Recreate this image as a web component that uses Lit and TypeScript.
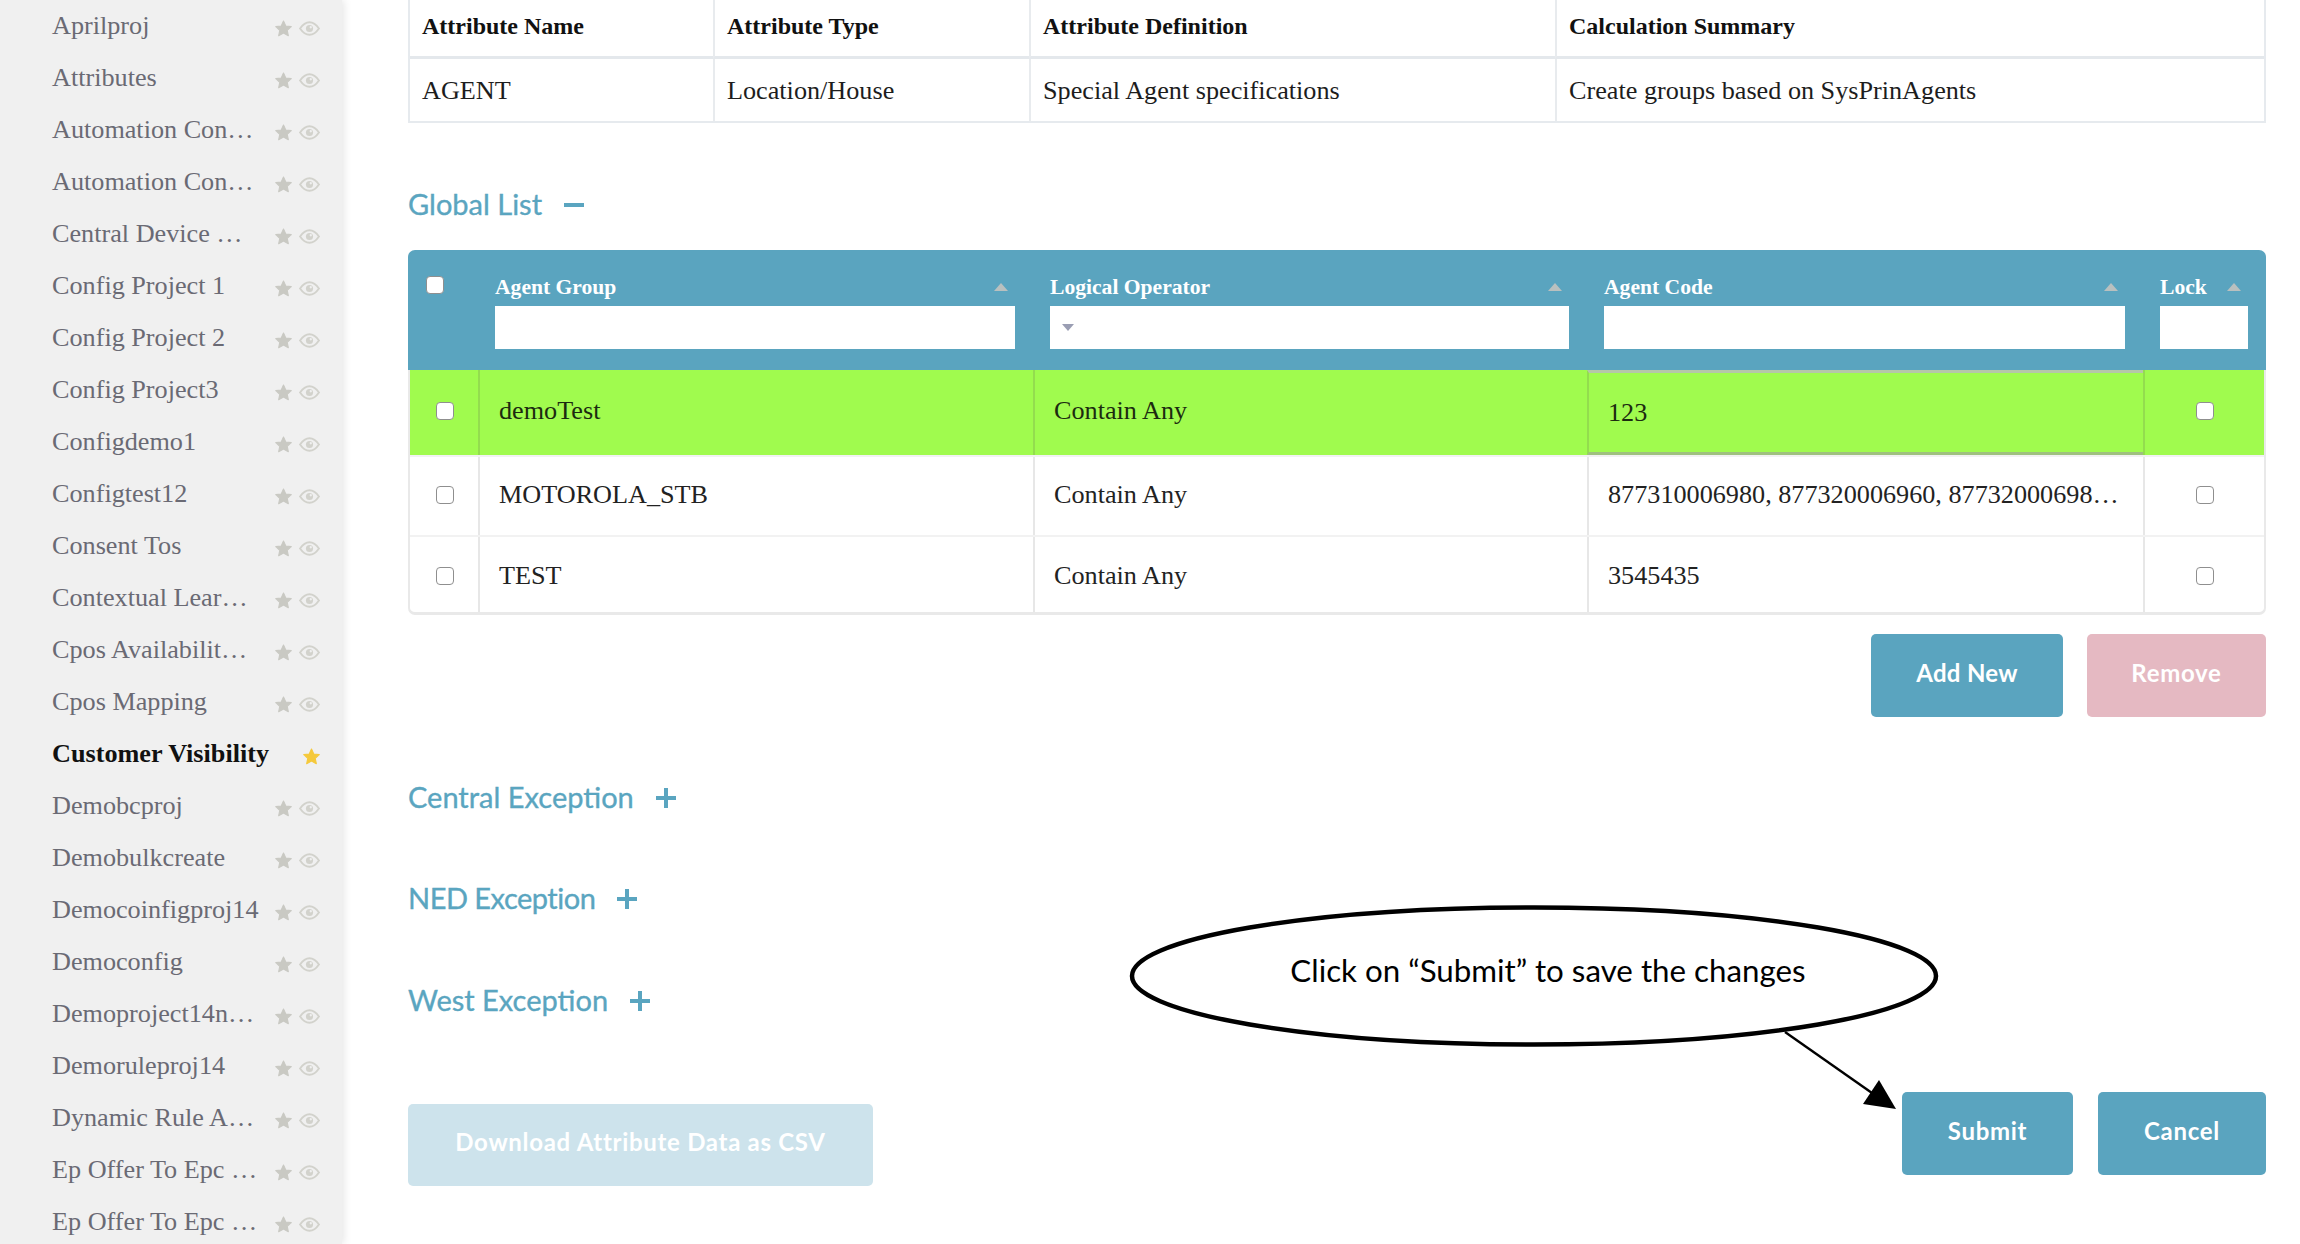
import { LitElement, html, css } from "lit";
import { customElement } from "lit/decorators.js";

const NAMES = [
  "Aprilproj", "Attributes", "Automation Con…", "Automation Con…", "Central Device …",
  "Config Project 1", "Config Project 2", "Config Project3", "Configdemo1", "Configtest12", "Consent Tos",
  "Contextual Lear…", "Cpos Availabilit…", "Cpos Mapping", "Customer Visibility", "Demobcproj", "Demobulkcreate",
  "Democoinfigproj14", "Democonfig", "Demoproject14n…", "Demoruleproj14", "Dynamic Rule A…",
  "Ep Offer To Epc …", "Ep Offer To Epc …",
];

const star = html`<svg class="star" viewBox="0 0 24 24"><path d="M12 2.5l2.9 6.3 6.9.8-5.1 4.7 1.4 6.8-6.1-3.4-6.1 3.4 1.4-6.8-5.1-4.7 6.9-.8z"/></svg>`;
const eye = html`<svg class="eye" viewBox="0 0 20 14"><path d="M1 7C4 2.6 7 1 10 1s6 1.6 9 6c-3 4.4-6 6-9 6s-6-1.6-9-6z"/><circle cx="10" cy="7" r="3.4"/><circle cx="11.2" cy="5.8" r="1.1" class="glint"/></svg>`;
const plus = html`<svg class="toggle" viewBox="0 0 22 22"><path d="M11 1v20M1 11h20"/></svg>`;
const minus = html`<svg class="toggle" viewBox="0 0 22 22"><path d="M1 11h20"/></svg>`;

@customElement("app-root")
export class AppRoot extends LitElement {
  static styles = css`
    :host { display: block; width: 2300px; height: 1244px; overflow: hidden; position: relative; background: #fff; font-family: "Liberation Serif", serif; color: #222; }
    .page { display: flex; height: 1244px; }
    .side { width: 342px; flex: none; height: 1244px; overflow: hidden; background: #f0f0f0; box-shadow: 2px 0 8px rgba(0,0,0,.1); }
    .item { height: 52px; display: flex; align-items: center; padding-left: 52px; font-size: 26.2px; color: #6a6a74; }
    .item .name { width: 206px; flex: none; white-space: nowrap; line-height: 52px; }
    .item.active { color: #111; font-weight: 700; }
    .item.active .name { width: 240px; }
    .icons { display: flex; align-items: center; margin-left: 16px; padding-top: 4px; }
    .item.active .icons { margin-left: 10px; }
    .star { width: 19px; height: 19px; fill: #c9c9c3; stroke: #c9c9c3; stroke-width: 1.4; stroke-linejoin: round; }
    .item.active .star { fill: #f5c93b; stroke: #f5c93b; }
    .eye { width: 21px; height: 15px; margin-left: 6px; fill: none; stroke: #d2d2cc; stroke-width: 1.8; }
    .eye circle { fill: #d2d2cc; stroke: none; }
    .eye .glint { fill: #f0f0f0; }

    .main { flex: 1; min-width: 0; padding: 0 34px 0 66px; }

    .info { display: grid; grid-template-columns: 303px 316px 526px 709px; grid-template-rows: 59px 62px; border: solid #e6eaee; border-width: 0 2px 2px; height: 123px; box-sizing: border-box; font-size: 26.2px; color: #1d1d1d; }
    .info > div { display: flex; align-items: center; padding-left: 12px; border-left: 2px solid #e8ebee; box-sizing: border-box; }
    .info > div:nth-child(4n+1) { border-left: 0; }
    .info .h { font-size: 24px; font-weight: 700; color: #111; border-bottom: 3px solid #e4e8ec; padding-bottom: 3px; }
    .info .c { padding-top: 2px; }

    .sec { display: flex; align-items: center; height: 40px; font-family: "Lato", sans-serif; font-size: 29px; font-weight: 400; color: #5aa5c0; -webkit-text-stroke: .35px #5aa5c0; }
    .sec.global { margin-top: 60px; }
    .sec.central { margin-top: 59px; }
    .sec.ned { margin-top: 61px; letter-spacing: -.5px; }
    .sec.west { margin-top: 62px; }
    .toggle { width: 22px; height: 22px; margin-left: 21px; margin-top: 4px; fill: none; stroke: #5aa5c0; stroke-width: 4; }

    .grid { margin-top: 27px; border-radius: 7px 7px 0 0; overflow: hidden; }
    .head { display: grid; grid-template-columns: 70px 555px 554px 556px 1fr; height: 120px; background: #5aa4bf; box-sizing: border-box; }
    .th { padding: 22px 18px 0 17px; box-sizing: border-box; }
    .th .label { display: flex; align-items: center; justify-content: space-between; height: 30px; margin-bottom: 4px; color: #fff; font-size: 21.6px; font-weight: 700; padding-right: 7px; }
    .sort { width: 0; height: 0; border: solid transparent; border-width: 0 7px 8px; border-bottom-color: #b9c0bf; }
    .field { display: block; box-sizing: border-box; width: 100%; height: 43px; border: 0; background: #fff; padding: 0 0 0 12px; margin: 0; }
    .select { display: flex; align-items: center; }
    .caret { width: 0; height: 0; border: solid transparent; border-width: 7px 6px 0; border-top-color: #9a9eb3; }
    .head-check { padding: 26px 0 0 18px; }

    .body { border: solid #e9e9e9; border-width: 0 2px 3px; border-radius: 0 0 7px 7px; overflow: hidden; }
    .row { display: grid; grid-template-columns: 68px 555px 554px 556px 1fr; height: 80px; font-size: 26.2px; color: #222; border-top: 2px solid #f2f2f2; box-sizing: border-box; }
    .row.first { height: 85px; border-top: 0; background: #a0fb4e; color: #1c2b10; margin: 0 -2px; padding: 0 2px; }
    .row.last { height: 77px; }
    .td { display: flex; align-items: center; padding: 0 19px 2px; border-left: 2px solid #e7e7e7; min-width: 0; box-sizing: border-box; white-space: nowrap; }
    .row.last .td { padding-top: 3px; padding-bottom: 0; }
    .row .td:first-child { border-left: 0; justify-content: center; padding-left: 2px; padding-right: 0; }
    .row .td.center { justify-content: center; padding-left: 0; padding-right: 0; }
    .row.first .td { border-left-color: #93dd4e; padding-bottom: 4px; }
    .row.first .td.code { border-top: 3px solid #b5c7a8; border-bottom: 3px solid #9fc07f; padding-bottom: 0; }

    input[type="checkbox"] { appearance: none; display: block; width: 18px; height: 18px; margin: 0; background: #fff; border: 1.5px solid #8f8f8f; border-radius: 4px; box-sizing: border-box; }

    .btn { display: flex; align-items: center; justify-content: center; box-sizing: border-box; border: 0; color: #fff; border-radius: 5px; font-family: "Lato", sans-serif; font-weight: 700; font-size: 24px; letter-spacing: .7px; background: #5aa4bf; padding: 0 0 7px; }
    .actions { display: flex; justify-content: flex-end; gap: 24px; margin-top: 19px; }
    .actions .btn { height: 83px; }
    .add { width: 192px; letter-spacing: .3px; }
    .remove { width: 179px; background: #e5b9c2; }
    .foot { display: flex; align-items: flex-start; justify-content: space-between; margin-top: 73px; }
    .download { width: 465px; height: 82px; margin-top: 12px; background: #cde3ec; }
    .foot-right { display: flex; gap: 25px; }
    .foot-right .btn { height: 83px; }
    .submit { width: 171px; }
    .cancel { width: 168px; }

    .note { position: absolute; inset: 0; pointer-events: none; }
    .note svg { position: absolute; left: 0; top: 0; width: 2300px; height: 1244px; }
    .note-text { position: absolute; left: 1132px; top: 905px; width: 832px; height: 130px; display: flex; align-items: center; justify-content: center; font-family: "Lato", sans-serif; font-size: 31.3px; color: #000; white-space: nowrap; }
  `;

  private gridRow(cls: string, name: string, code: string) {
    return html`<div class="row ${cls}">
      <div class="td"><input type="checkbox" /></div>
      <div class="td">${name}</div>
      <div class="td">Contain Any</div>
      <div class="td code">${code}</div>
      <div class="td center"><input type="checkbox" /></div>
    </div>`;
  }

  render() {
    return html`
      <div class="page">
        <aside class="side">
          ${NAMES.map((n) => {
            const active = n === "Customer Visibility";
            return html`<div class="item ${active ? "active" : ""}">
              <span class="name">${n}</span>
              <span class="icons">${star}${active ? "" : eye}</span>
            </div>`;
          })}
        </aside>
        <main class="main">
          <div class="info">
            <div class="h">Attribute Name</div>
            <div class="h">Attribute Type</div>
            <div class="h">Attribute Definition</div>
            <div class="h">Calculation Summary</div>
            <div class="c">AGENT</div>
            <div class="c">Location/House</div>
            <div class="c">Special Agent specifications</div>
            <div class="c">Create groups based on SysPrinAgents</div>
          </div>

          <div class="sec global">Global List${minus}</div>

          <div class="grid">
            <div class="head">
              <div class="head-check"><input type="checkbox" /></div>
              <div class="th"><div class="label">Agent Group<i class="sort"></i></div><input class="field" /></div>
              <div class="th"><div class="label">Logical Operator<i class="sort"></i></div><div class="field select"><i class="caret"></i></div></div>
              <div class="th"><div class="label">Agent Code<i class="sort"></i></div><input class="field" /></div>
              <div class="th"><div class="label">Lock<i class="sort"></i></div><input class="field" /></div>
            </div>
            <div class="body">
              ${this.gridRow("first", "demoTest", "123")}
              ${this.gridRow("", "MOTOROLA_STB", "877310006980, 877320006960, 87732000698…")}
              ${this.gridRow("last", "TEST", "3545435")}
            </div>
          </div>

          <div class="actions">
            <button class="btn add">Add New</button>
            <button class="btn remove">Remove</button>
          </div>

          <div class="sec central">Central Exception${plus}</div>
          <div class="sec ned">NED Exception${plus}</div>
          <div class="sec west">West Exception${plus}</div>

          <div class="foot">
            <button class="btn download">Download Attribute Data as CSV</button>
            <div class="foot-right">
              <button class="btn submit">Submit</button>
              <button class="btn cancel">Cancel</button>
            </div>
          </div>
        </main>
      </div>
      <div class="note">
        <svg viewBox="0 0 2300 1244">
          <ellipse cx="1534" cy="976" rx="402" ry="68.5" fill="#fff" stroke="#000" stroke-width="4.5"/>
          <path d="M1785 1032L1872 1093" stroke="#000" stroke-width="2.4" fill="none"/>
          <path d="M1896 1109L1863 1104L1879 1080Z" fill="#000"/>
        </svg>
        <div class="note-text">Click on “Submit” to save the changes</div>
      </div>
    `;
  }
}
